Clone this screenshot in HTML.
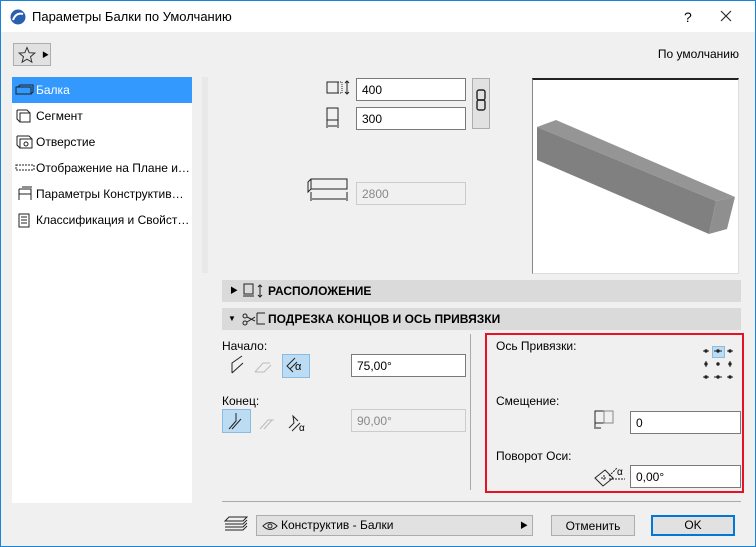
<!DOCTYPE html>
<html><head><meta charset="utf-8"><style>
*{box-sizing:border-box}
body{margin:0;width:756px;height:547px;overflow:hidden;font-family:"Liberation Sans","Noto Sans CJK SC",sans-serif;font-size:12px;color:#000;background:#f0f0f0}
.win{position:absolute;left:0;top:0;width:756px;height:547px;border:1px solid #1883d7;background:#f0f0f0}
.abs{position:absolute}
.title{left:0;top:0;width:754px;height:31px;background:#fff}
.inp{position:absolute;background:#fff;border:1px solid #7a7a7a;height:23px;padding:4px 5px;font-size:12px}
.dis{background:#f0f0f0;border-color:#ccc;color:#888}
.list div{height:26px;line-height:26px;padding-left:24px;position:relative;white-space:nowrap;overflow:hidden;text-overflow:ellipsis;padding-right:2px}
.sec{position:absolute;left:221px;width:519px;height:22px;background:#dadada;font-weight:bold;line-height:22px;font-size:12px}
.btn{position:absolute;background:#e1e1e1;border:1px solid #adadad;text-align:center;line-height:21px}
</style></head><body><div class="win">
<div class="abs title">
<svg class="abs" style="left:9px;top:8px" width="16" height="16"><circle cx="8" cy="8" r="7.5" fill="#2a5fb0"/><path d="M3 11 Q6 3 13 5" stroke="#fff" stroke-width="2" fill="none"/></svg>
<div class="abs" style="left:31px;top:8px;font-size:13px">Параметры Балки по Умолчанию</div>
<div class="abs" style="left:683px;top:8px;font-size:14px">?</div>
<svg class="abs" style="left:719px;top:9px" width="12" height="12"><path d="M1 1L11 11M11 1L1 11" stroke="#222" stroke-width="1.1"/></svg>
</div>
<div class="abs" style="left:12px;top:42px;width:38px;height:23px;background:#e1e1e1;border:1px solid #adadad"><svg class="abs" style="left:4px;top:2px" width="18" height="18"><path d="M9 1.5 L11.2 6.7 L16.8 7.1 L12.5 10.7 L13.9 16.2 L9 13.2 L4.1 16.2 L5.5 10.7 L1.2 7.1 L6.8 6.7 Z" fill="none" stroke="#333"/></svg><span style="position:absolute;left:28px;top:6px;font-size:7px">▶</span></div>
<div class="abs" style="right:16px;top:46px">По умолчанию</div>
<div class="abs list" style="left:11px;top:76px;width:180px;height:426px;background:#fff">
<div style="background:#3399ff;color:#fff">Балка<svg class="abs" style="left:3px;top:7px" width="20" height="12"><rect x="1" y="3" width="15" height="7" fill="none" stroke="#222"/><path d="M3 3 L5 1 H18 V8 L16 10" fill="none" stroke="#222"/></svg></div>
<div>Сегмент<svg class="abs" style="left:4px;top:6px" width="16" height="14"><rect x="4" y="4" width="10" height="9" fill="none" stroke="#222"/><path d="M1 1 H11 L14 4 M1 1 V10 L4 13" fill="none" stroke="#222"/></svg></div>
<div>Отверстие<svg class="abs" style="left:4px;top:6px" width="18" height="14"><rect x="4" y="4" width="12" height="9" fill="none" stroke="#222"/><path d="M1 1 H13 L16 4 M1 1 V10 L4 13" fill="none" stroke="#222"/><circle cx="10" cy="9" r="2" fill="none" stroke="#222"/></svg></div>
<div>Отображение на Плане и ...<svg class="abs" style="left:3px;top:9px" width="20" height="8"><rect x="1" y="1" width="18" height="5" fill="none" stroke="#222" stroke-dasharray="2 1"/></svg></div>
<div>Параметры Конструктивно...<svg class="abs" style="left:5px;top:5px" width="16" height="16"><path d="M2 3 H14 V14 M2 3 V14 M2 8 H14 M5 1 H15" fill="none" stroke="#222"/></svg></div>
<div>Классификация и Свойства<svg class="abs" style="left:6px;top:6px" width="12" height="15"><rect x="1" y="1" width="10" height="13" fill="none" stroke="#222"/><path d="M3 4H9M3 7H9M3 10H9" stroke="#222"/></svg></div>
</div>
<div class="abs" style="left:201px;top:76px;width:6px;height:196px;background:#e8e8e8"></div>
<svg class="abs" style="left:324px;top:78px" width="30" height="60"><rect x="2" y="3" width="11" height="11" fill="none" stroke="#222"/><path d="M13 3 H17 V14 H13" fill="none" stroke="#222" stroke-dasharray="1 1"/><path d="M22 2 V15 M20 4 L22 2 L24 4 M20 13 L22 15 L24 13" fill="none" stroke="#222"/><rect x="2" y="29" width="11" height="12" fill="none" stroke="#222"/><path d="M2 41 V49 M13 41 V49 M3 47 H12" fill="none" stroke="#222"/></svg>
<div class="inp" style="left:355px;top:77px;width:110px">400</div>
<div class="inp" style="left:355px;top:106px;width:110px">300</div>
<div class="abs" style="left:471px;top:77px;width:18px;height:51px;background:#e1e1e1;border:1px solid #adadad"><svg width="16" height="49"><rect x="4" y="11" width="8" height="10" rx="2" fill="none" stroke="#222" stroke-width="1.4"/><rect x="4" y="21" width="8" height="10" rx="2" fill="none" stroke="#222" stroke-width="1.4"/></svg></div>
<svg class="abs" style="left:306px;top:176px" width="42" height="26"><path d="M1 5 L4 2 H40 V12 H4 L1 15 Z M4 2 V12" fill="none" stroke="#222"/><path d="M4 15 V24 M40 15 V24 M5 22 H39" fill="none" stroke="#222"/></svg>
<div class="inp dis" style="left:355px;top:181px;width:110px">2800</div>
<div class="abs" style="left:531px;top:77px;width:207px;height:196px;background:#fff;border:1px solid #ddd;border-top:2px solid #222;border-left:1px solid #888;overflow:hidden">
<svg class="abs" style="left:-532px;top:-79px" width="756" height="300"><polygon points="536,126 555,119 734,196 715,200" fill="#959595"/><polygon points="536,126 715,200 708,233 536,159" fill="#808080"/><polygon points="715,200 734,196 726,228 708,233" fill="#8f8f8f"/></svg>
</div>
<div class="sec" style="top:279px"><span style="position:absolute;left:8px;font-size:8px">▶</span><span style="position:absolute;left:46px">РАСПОЛОЖЕНИЕ</span><svg class="abs" style="left:20px;top:3px" width="22" height="16"><rect x="2" y="1" width="9" height="10" fill="none" stroke="#222"/><path d="M1 13 H12 M18 2 V14 M16 4 L18 2 L20 4 M16 12 L18 14 L20 12" fill="none" stroke="#222"/></svg></div>
<div class="sec" style="top:307px"><span style="position:absolute;left:6px;font-size:8px">▼</span><span style="position:absolute;left:46px">ПОДРЕЗКА КОНЦОВ И ОСЬ ПРИВЯЗКИ</span><svg class="abs" style="left:20px;top:4px" width="24" height="14"><circle cx="3" cy="4" r="2" fill="none" stroke="#222"/><circle cx="3" cy="11" r="2" fill="none" stroke="#222"/><path d="M5 5 L13 9 M5 10 L13 5 M15 1 V12 H23 M15 1 H23" fill="none" stroke="#222"/></svg></div>
<div class="abs" style="left:221px;top:338px">Начало:</div>
<svg class="abs" style="left:228px;top:352px" width="90" height="26"><path d="M3 20 V10 L13 3 M3 20 L14 10" fill="none" stroke="#222"/><path d="M26 19 L34 10 H41 M26 19 H35 L42 12" fill="none" stroke="#bbb"/></svg>
<div class="abs" style="left:281px;top:353px;width:28px;height:24px;background:#bcdcf4;border:1px solid #8bbbe3"><span style="position:absolute;left:12px;top:6px;font-size:11px">α</span><svg class="abs" style="left:2px;top:2px" width="14" height="18"><path d="M10 1 L2 9 L8 15 M12 5 L5 12" fill="none" stroke="#222"/></svg></div>
<div class="inp" style="left:350px;top:353px;width:115px">75,00°</div>
<div class="abs" style="left:221px;top:393px">Конец:</div>
<div class="abs" style="left:221px;top:408px;width:29px;height:24px;background:#bcdcf4;border:1px solid #8bbbe3"><svg width="27" height="22"><path d="M6 19 L13 11 V3 M9 19 L18 9" fill="none" stroke="#222"/></svg></div>
<svg class="abs" style="left:255px;top:410px" width="60" height="24"><path d="M4 18 L12 9 H18 M8 18 L16 9" fill="none" stroke="#bbb"/><path d="M33 17 L38 12 L37 5 L42 10 M36 20 L44 12" fill="none" stroke="#222"/><text x="43" y="20" font-size="10" font-family="Liberation Sans">α</text></svg>
<div class="inp dis" style="left:350px;top:408px;width:115px">90,00°</div>
<div class="abs" style="left:469px;top:333px;width:1px;height:156px;background:#aaa"></div>
<div class="abs" style="left:484px;top:332px;width:259px;height:160px;border:2px solid #e81123"></div>
<div class="abs" style="left:495px;top:338px">Ось Привязки:</div>
<div class="abs" style="left:711px;top:345px;width:13px;height:12px;background:#bcdcf4;border:1px solid #8bbbe3"></div>
<svg class="abs" style="left:700px;top:344px" width="40" height="35"><g fill="#222"><circle cx="5" cy="6" r="1.7"/><circle cx="17" cy="6" r="1.7"/><circle cx="29" cy="6" r="1.7"/><circle cx="5" cy="19" r="1.7"/><circle cx="17" cy="19" r="1.7"/><circle cx="29" cy="19" r="1.7"/><circle cx="5" cy="32" r="1.7"/><circle cx="17" cy="32" r="1.7"/><circle cx="29" cy="32" r="1.7"/></g><path d="M2 6H8M13 6H21M26 6H32M5 16V22M29 16V22M2 32H8M13 32H21M26 32H32" stroke="#222"/></svg>
<div class="abs" style="left:495px;top:393px">Смещение:</div>
<svg class="abs" style="left:592px;top:408px" width="24" height="24"><rect x="2" y="2" width="9" height="12" fill="none" stroke="#222"/><rect x="11" y="2" width="9" height="12" fill="none" stroke="#888"/><path d="M2 14V20 M3 19H8" stroke="#222"/></svg>
<div class="inp" style="left:629px;top:410px;width:111px">0</div>
<div class="abs" style="left:495px;top:448px">Поворот Оси:</div>
<svg class="abs" style="left:590px;top:463px" width="36" height="24"><path d="M4 14 L14 6 L22 14 L12 22 Z" fill="none" stroke="#222"/><path d="M10 14H16M13 11V17M18 12 L26 4 M18 15H34" stroke="#222" stroke-dasharray="2 1"/><text x="26" y="11" font-size="10" font-family="Liberation Sans">α</text></svg>
<div class="inp" style="left:629px;top:464px;width:111px">0,00°</div>
<div class="abs" style="left:221px;top:500px;width:519px;height:1px;background:#aaa"></div>
<svg class="abs" style="left:222px;top:514px" width="26" height="20"><path d="M6 2H24L20 6H2Z M2 9H20L24 5 M2 12H20L24 8 M2 15H20L24 11" fill="none" stroke="#222"/></svg>
<div class="abs" style="left:255px;top:514px;width:277px;height:21px;background:#e1e1e1;border:1px solid #adadad;line-height:19px"><svg class="abs" style="left:5px;top:5px" width="16" height="10"><path d="M1 5 Q8 -2 15 5 Q8 12 1 5Z" fill="none" stroke="#222"/><circle cx="8" cy="5" r="2" fill="none" stroke="#222"/></svg><span style="position:absolute;left:24px">Конструктив - Балки</span><span style="position:absolute;right:4px;font-size:8px">▶</span></div>
<div class="btn" style="left:550px;top:514px;width:84px;height:21px">Отменить</div>
<div class="btn" style="left:650px;top:514px;width:84px;height:21px;border:2px solid #0078d7;line-height:17px">OK</div>
</div></body></html>
